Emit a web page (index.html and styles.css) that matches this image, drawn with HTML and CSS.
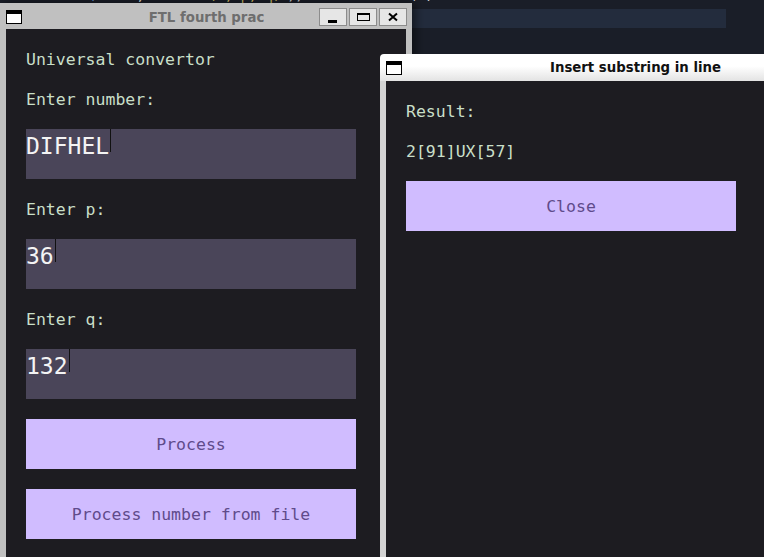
FILE: index.html
```html
<!DOCTYPE html>
<html>
<head>
<meta charset="utf-8">
<link rel="stylesheet" href="styles.css">
</head>
<body>
<div class="desktop">
  <div class="codeline"><span class="c-blue">fmt.Println(</span><span class="c-yel">"res"</span><span class="c-wht">, </span><span class="c-blue">convert</span><span class="c-yel">(n, p, q)</span><span class="c-wht"> // </span><span class="c-blue">strconv</span><span class="c-yel">.Itoa</span><span class="c-wht">(x)</span><span class="c-gray">843555635643576</span></div>
  <div class="hl-band"></div>

  <div class="win win-main">
    <div class="titlebar titlebar-main">
      <span class="wicon"></span>
      <span class="title title-main">FTL fourth prac</span>
      <div class="tb-buttons">
        <span class="tb-btn"><svg width="26" height="16" viewBox="0 0 26 16"><rect x="8" y="11" width="9" height="3" fill="#000"/></svg></span>
        <span class="tb-btn"><svg width="26" height="16" viewBox="0 0 26 16"><rect x="7.5" y="4.5" width="12" height="7" fill="none" stroke="#000" stroke-width="1"/><rect x="7" y="4" width="13" height="2" fill="#000"/></svg></span>
        <span class="tb-btn"><svg width="26" height="16" viewBox="0 0 26 16"><path d="M9 4.5 L17 11.5 M17 4.5 L9 11.5" stroke="#000" stroke-width="2" fill="none"/></svg></span>
      </div>
    </div>
    <div class="client">
      <div class="label">Universal convertor</div>
      <div class="label">Enter number:</div>
      <div class="field">DIFHEL<span class="caret"></span></div>
      <div class="label">Enter p:</div>
      <div class="field">36<span class="caret"></span></div>
      <div class="label">Enter q:</div>
      <div class="field">132<span class="caret"></span></div>
      <div class="btn">Process</div>
      <div class="btn">Process number from file</div>
    </div>
  </div>

  <div class="win win-dialog">
    <div class="titlebar titlebar-dialog">
      <span class="wicon"></span>
      <span class="title title-dialog">Insert substring in line</span>
      <span></span>
    </div>
    <div class="client client-dialog">
      <div class="label">Result:</div>
      <div class="label">2[91]UX[57]</div>
      <div class="btn">Close</div>
    </div>
  </div>
</div>
</body>
</html>
```

FILE: styles.css
```css
html, body {
  margin: 0;
  padding: 0;
  background: #1a1e28;
  overflow: hidden;
}

.desktop {
  position: relative;
  width: 764px;
  height: 557px;
  overflow: hidden;
  background: #1a1e28;
}

.codeline {
  position: absolute;
  left: 0;
  top: -11px;
  font: 13px/14px "DejaVu Sans Mono", monospace;
  white-space: pre;
  letter-spacing: 0.2px;
}
.c-blue { color: #6f9fe0; }
.c-yel { color: #d8c36a; }
.c-wht { color: #e8e8e8; }
.c-gray { color: #cfd3da; }

.hl-band {
  position: absolute;
  left: 406px;
  top: 9px;
  width: 320px;
  height: 19px;
  background: #232c3d;
}

.win {
  position: absolute;
  display: flex;
  flex-direction: column;
}

.win-main {
  left: 0;
  top: 3px;
  width: 412px;
  height: 600px;
  background: #c0c0c0;
  box-shadow: 3px 0 10px rgba(0, 0, 0, 0.55);
}

.titlebar {
  display: grid;
  grid-template-columns: 1fr auto 1fr;
  align-items: center;
  box-sizing: border-box;
}

.titlebar-main {
  height: 26px;
  padding: 2px 5px 0 6px;
}

.wicon {
  display: block;
  width: 16px;
  height: 14px;
  box-sizing: border-box;
  background: #fff;
  border: 1px solid #000;
  border-top-width: 4px;
}

.title {
  font-family: "DejaVu Sans", sans-serif;
  font-weight: bold;
  font-size: 13.3px;
  white-space: nowrap;
}
.title-main { color: #6e6e6e; }
.title-dialog { color: #111; }

.tb-buttons {
  display: flex;
  justify-content: flex-end;
  gap: 2px;
}

.tb-btn {
  display: block;
  width: 28px;
  height: 18px;
  box-sizing: border-box;
  border: 1px solid #8c8c8c;
  background: #e6e6e6;
}
.tb-btn svg { display: block; }

.client {
  flex: 1;
  margin: 0 6px;
  background: #1d1c21;
  padding: 20px;
  display: flex;
  flex-direction: column;
  gap: 20px;
}

.label {
  font: 16.5px/20px "DejaVu Sans Mono", monospace;
  color: #c9dfc8;
  white-space: pre;
  height: 19px;
  padding-top: 1px;
}

.field {
  width: 330px;
  height: 50px;
  background: #4a4559;
  color: #f4f4f4;
  font: 23px/34px "DejaVu Sans Mono", monospace;
  white-space: pre;
}

.caret {
  display: inline-block;
  width: 1px;
  height: 23px;
  margin-left: 1px;
  background: #111;
  vertical-align: top;
}

.btn {
  width: 330px;
  height: 50px;
  box-sizing: border-box;
  padding-top: 2px;
  background: #d0bcff;
  color: #5f4b8b;
  font: 16.5px/20px "DejaVu Sans Mono", monospace;
  display: flex;
  align-items: center;
  justify-content: center;
  white-space: pre;
}

.win-dialog {
  left: 380px;
  top: 54px;
  width: 511px;
  height: 520px;
  border-radius: 4px 4px 0 0;
  overflow: hidden;
}

.titlebar-dialog {
  height: 27px;
  padding: 0 6px;
  background: linear-gradient(#ffffff 0%, #ffffff 45%, #e3e3e3 100%);
}

.client-dialog {
  margin: 0;
  border-left: 6px solid #d3d3d3;
}
```
